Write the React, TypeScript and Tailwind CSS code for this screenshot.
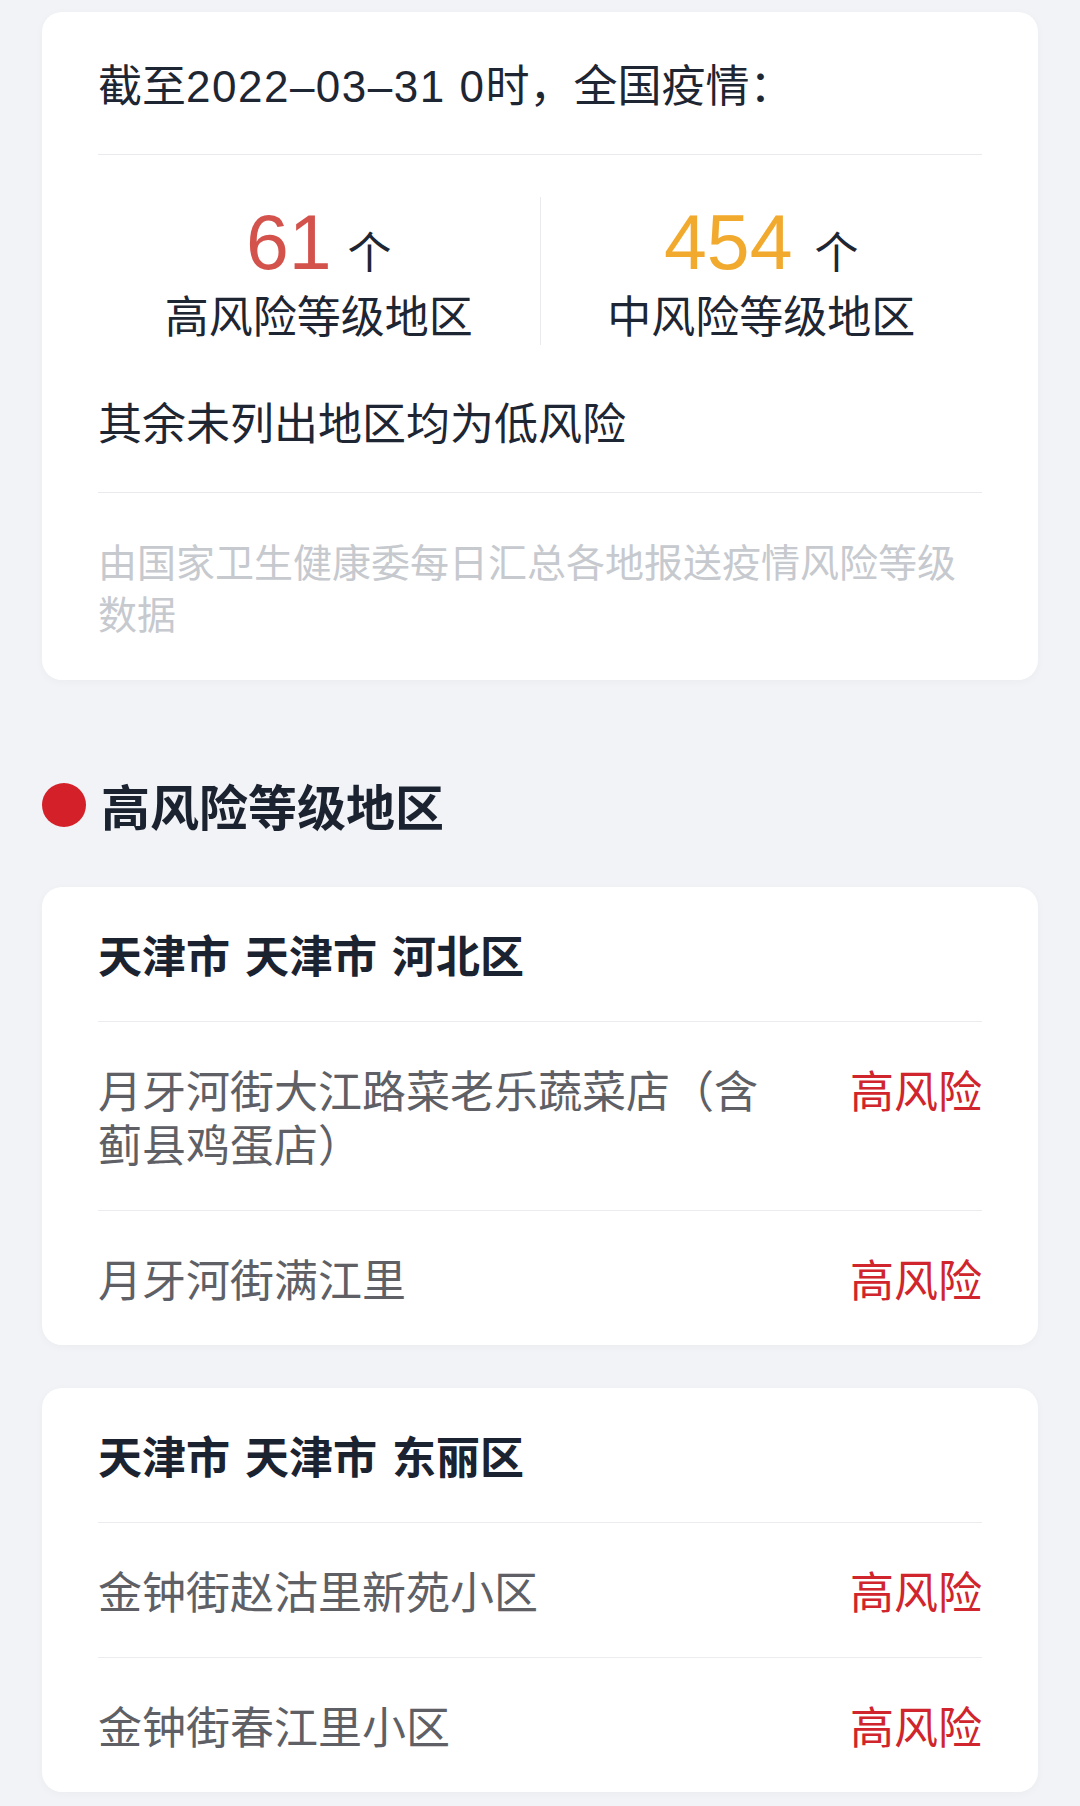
import React from "react";

const FONT = { fontFamily: '"Noto Sans CJK SC", "Noto Sans", sans-serif' };
const NUM = { fontFamily: '"Liberation Sans", Arial, sans-serif' };

function Row({ text, status }: { text: string; status: string }) {
  return (
    <div className="flex justify-between border-t border-[#ebecef] py-[40px]">
      <div className="mr-[60px] flex-1 text-[44px] leading-[54px] text-[#5e6066]">{text}</div>
      <div className="shrink-0 text-[44px] leading-[54px] text-[#d0252c]">{status}</div>
    </div>
  );
}

function AreaCard({ title, rows }: { title: string; rows: string[] }) {
  return (
    <div className="mx-[42px] rounded-[20px] bg-white px-[56px] shadow-[0_2px_10px_rgba(0,0,0,0.03)]">
      <div className="py-[40px] text-[44px] font-bold leading-[54px] text-[#1b2230] [word-spacing:5px]">{title}</div>
      {rows.map((r) => (
        <Row key={r} text={r} status="高风险" />
      ))}
    </div>
  );
}

export default function App() {
  return (
    <div className="min-h-[1806px] w-full bg-[#f1f3f6] pt-[12px] pb-[14px]" style={FONT}>
      <div className="mx-[42px] rounded-[20px] bg-white px-[56px] pt-[44px] pb-[42px] shadow-[0_2px_10px_rgba(0,0,0,0.03)]">
        <div className="h-[54px] text-[44px] leading-[54px] text-[#1f2633]">
          截至
          <span className="leading-none tracking-[1.5px]" style={NUM}>
            2022–03–31 0
          </span>
          时，全国疫情：
        </div>
        <div className="mt-[44px] h-px bg-[#e9eaed]" />
        <div className="mt-[42px] flex">
          <div className="flex h-[148px] flex-1 flex-col items-center">
            <div className="flex h-[90px] items-baseline">
              <span className="text-[77px] leading-[90px] text-[#d4524c]" style={NUM}>61</span>
              <span className="ml-[16px] text-[44px] leading-[54px] text-[#1f2633]">个</span>
            </div>
            <div className="text-[44px] leading-[54px] text-[#1f2633]">高风险等级地区</div>
          </div>
          <div className="h-[148px] w-px bg-[#e9eaed]" />
          <div className="flex h-[148px] flex-1 flex-col items-center">
            <div className="flex h-[90px] items-baseline">
              <span className="text-[77px] leading-[90px] text-[#f2aa2e]" style={NUM}>454</span>
              <span className="ml-[22px] text-[44px] leading-[54px] text-[#1f2633]">个</span>
            </div>
            <div className="text-[44px] leading-[54px] text-[#1f2633]">中风险等级地区</div>
          </div>
        </div>
        <div className="mt-[49px] text-[44px] leading-[54px] text-[#1f2633]">其余未列出地区均为低风险</div>
        <div className="mt-[44px] h-px bg-[#e9eaed]" />
        <div className="mt-[41px] text-[39px] leading-[52px] text-[#c6c9ce]">
          由国家卫生健康委每日汇总各地报送疫情风险等级数据
        </div>
      </div>

      <div className="mx-[42px] mt-[98px] flex items-center">
        <div className="h-[44px] w-[44px] rounded-full bg-[#d42028]" />
        <div className="ml-[15px] text-[49px] font-bold leading-[54px] text-[#1b2230]">高风险等级地区</div>
      </div>

      <div className="mt-[55px]">
        <AreaCard
          title="天津市 天津市 河北区"
          rows={["月牙河街大江路菜老乐蔬菜店（含蓟县鸡蛋店）", "月牙河街满江里"]}
        />
      </div>
      <div className="mt-[43px]">
        <AreaCard title="天津市 天津市 东丽区" rows={["金钟街赵沽里新苑小区", "金钟街春江里小区"]} />
      </div>
    </div>
  );
}
